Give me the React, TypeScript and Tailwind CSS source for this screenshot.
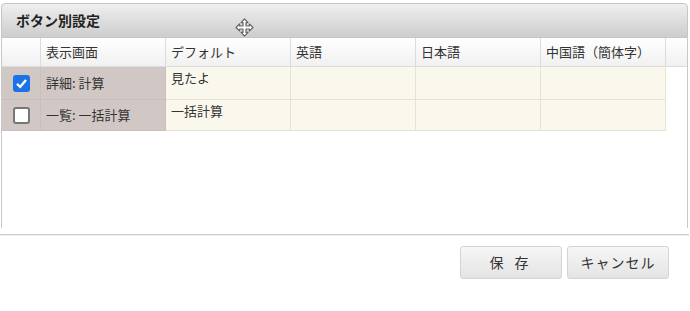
import React from "react";

const font = { fontFamily: '"Noto Sans CJK JP", "Noto Sans", sans-serif' };

const cols = [
  { label: "デフォルト" },
  { label: "英語" },
  { label: "日本語" },
  { label: "中国語（簡体字）" },
];

const rows = [
  { checked: true, screen: "詳細: 計算", values: ["見たよ", "", "", ""] },
  { checked: false, screen: "一覧: 一括計算", values: ["一括計算", "", "", ""] },
];

function MoveIcon() {
  return (
    <svg width="19" height="19" viewBox="0 0 19 19" className="absolute left-[233px] top-[14px]">
      <path
        d="M9.5 1 L13 4.6 L11 4.6 L11 8 L14.4 8 L14.4 6 L18 9.5 L14.4 13 L14.4 11 L11 11 L11 14.4 L13 14.4 L9.5 18 L6 14.4 L8 14.4 L8 11 L4.6 11 L4.6 13 L1 9.5 L4.6 6 L4.6 8 L8 8 L8 4.6 L6 4.6 Z"
        fill="#fff"
        stroke="#666"
        strokeWidth="1.2"
        strokeLinejoin="round"
      />
    </svg>
  );
}

function Check({ checked }: { checked: boolean }) {
  if (checked) {
    return (
      <span className="flex h-[17px] w-[17px] items-center justify-center rounded-[3px] bg-[#1a73e8]">
        <svg width="13" height="13" viewBox="0 0 13 13">
          <path d="M2 6.8 L5.2 9.8 L11 3" fill="none" stroke="#fff" strokeWidth="2.4" />
        </svg>
      </span>
    );
  }
  return <span className="h-[17px] w-[17px] rounded-[3px] border-2 border-[#767676] bg-white" />;
}

export default function App() {
  return (
    <div className="h-[311px] w-[690px] overflow-hidden bg-white text-[#333]" style={font}>
      <div className="ml-[1px] mt-[3px] w-[687px]">
        {/* Panel title bar */}
        <div className="relative flex h-[35px] items-center rounded-t-[4px] border border-[#c6c6c6] bg-gradient-to-b from-[#efefef] to-[#cdcdcd] px-[14px]">
          <span className="text-[14px] font-bold text-[#222]">ボタン別設定</span>
          <MoveIcon />
        </div>

        {/* Grid */}
        <div className="h-[190px] border-x border-[#c8c8c8]">
          <div className="flex h-[29px] border-b border-[#dcdcdc] bg-gradient-to-b from-white to-[#f1f1f1] text-[13px]">
            <div className="w-[39px] border-r border-[#dcdcdc]" />
            <div className="flex w-[125px] items-center border-r border-[#dcdcdc] px-[5px]">表示画面</div>
            {cols.map((c) => (
              <div key={c.label} className="flex w-[125px] items-center border-r border-[#dcdcdc] px-[5px]">
                {c.label}
              </div>
            ))}
          </div>
          {rows.map((r, i) => (
            <div key={i} className={`flex text-[13px] ${i === 0 ? "h-[33px]" : "h-[31px]"}`}>
              <div className="flex w-[39px] items-center justify-center border-b border-r border-[#c9bfbc] bg-[#d1c8c5]">
                <Check checked={r.checked} />
              </div>
              <div className="flex w-[125px] items-center border-b border-r border-[#c9bfbc] bg-[#d1c8c5] px-[5px]">
                {r.screen}
              </div>
              {r.values.map((v, j) => (
                <div key={j} className="w-[125px] border-b border-r border-[#e6e3d3] bg-[#faf8ed] px-[5px] pt-[2px] leading-[18px]">
                  {v}
                </div>
              ))}
            </div>
          ))}
        </div>
      </div>

      {/* Separator */}
      <div className="mt-[6px] h-[2px] w-[689px] border-t border-[#cfcfcf] bg-[#ececec]" />

      {/* Buttons */}
      <div className="mt-[10px] flex justify-end gap-[5px] pr-[21px]">
        <button className="h-[33px] w-[102px] rounded-[3px] border border-[#d4d4d4] bg-gradient-to-b from-[#f6f6f6] to-[#e4e4e4] text-[14px] tracking-[4px] text-[#333]">
          保 存
        </button>
        <button className="h-[33px] w-[102px] rounded-[3px] border border-[#d4d4d4] bg-gradient-to-b from-[#f6f6f6] to-[#e4e4e4] text-[14px] tracking-[1px] text-[#333]">
          キャンセル
        </button>
      </div>
    </div>
  );
}
